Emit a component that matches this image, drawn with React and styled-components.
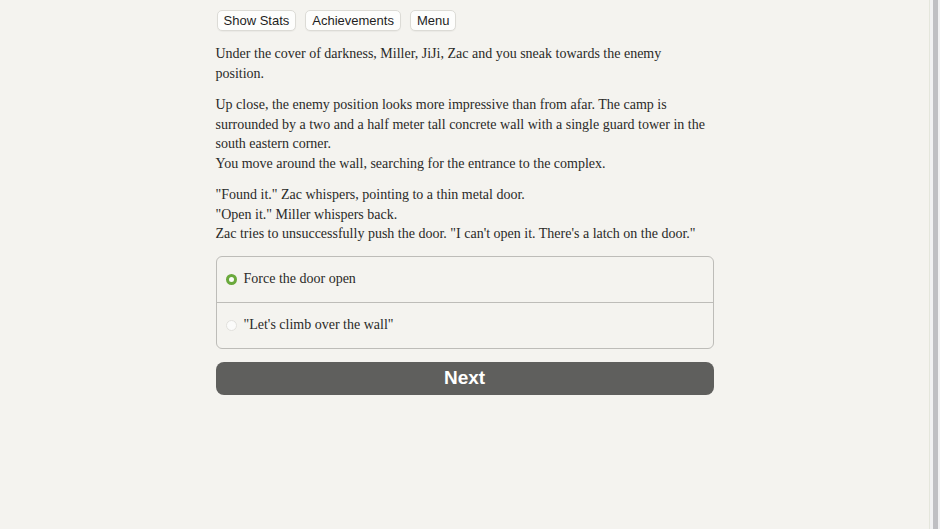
import React, { useState } from 'react';
import styled, { createGlobalStyle } from 'styled-components';

const GlobalStyle = createGlobalStyle`
  html, body {
    margin: 0;
    padding: 0;
    background: #f4f3ef;
  }
`;

const Screen = styled.div`
  display: flex;
  width: 940px;
  height: 529px;
  overflow: hidden;
  background: #f4f3ef;
`;

const Page = styled.main`
  flex: 1;
  display: flex;
  justify-content: center;
  border-right: 1px solid #e4e6dc;
`;

const Scrollbar = styled.div`
  width: 9px;
  display: flex;
  justify-content: center;
  padding-left: 1px;
  background: #f1f1f3;
`;

const Thumb = styled.div`
  width: 5px;
  height: 100%;
  background: #bfbfc3;
`;

const Column = styled.div`
  width: 498px;
  padding-top: 10px;
`;

const Toolbar = styled.nav`
  display: flex;
  gap: 9px;
  padding-left: 1px;
  margin-bottom: 13px;
`;

const ToolButton = styled.button`
  height: 21px;
  padding: 0 6px;
  font: 13px "Liberation Sans", Arial, sans-serif;
  color: #1e1e1e;
  background: #fdfdfc;
  border: 1px solid #dcdbd6;
  border-radius: 5px;
  box-shadow: 0 1px 1px rgba(0, 0, 0, 0.04);
`;

const Passage = styled.p`
  margin: 0 0 12px;
  font: 14px/19.5px "Liberation Serif", "Times New Roman", serif;
  color: #2a2a28;
`;

const Line = styled.span`
  display: block;
  white-space: nowrap;
`;

const Choices = styled.div`
  margin-top: 12px;
  border: 1px solid #bdbcb8;
  border-radius: 6px;
  overflow: hidden;
`;

const Choice = styled.label`
  display: flex;
  align-items: center;
  gap: 7px;
  height: 45px;
  padding-left: 9px;
  font: 14px "Liberation Serif", "Times New Roman", serif;
  color: #2a2a28;
  cursor: pointer;
  & + & {
    border-top: 1px solid #bdbcb8;
  }
`;

const Radio = styled.span`
  box-sizing: border-box;
  width: 11px;
  height: 11px;
  border-radius: 50%;
  background: #fbfbfa;
  border: ${p => (p.$on ? '3.5px solid #6aa93c' : '0.5px solid #e2e1dd')};
  flex: none;
`;

const NextButton = styled.button`
  display: block;
  width: 100%;
  height: 33px;
  margin-top: 13px;
  font: bold 19px "Liberation Sans", Arial, sans-serif;
  color: #fff;
  background: #5f5f5d;
  border: none;
  border-radius: 8px;
`;

const passages = [
  [
    'Under the cover of darkness, Miller, JiJi, Zac and you sneak towards the enemy',
    'position.',
  ],
  [
    'Up close, the enemy position looks more impressive than from afar. The camp is',
    'surrounded by a two and a half meter tall concrete wall with a single guard tower in the',
    'south eastern corner.',
    'You move around the wall, searching for the entrance to the complex.',
  ],
  [
    '"Found it." Zac whispers, pointing to a thin metal door.',
    '"Open it." Miller whispers back.',
    'Zac tries to unsuccessfully push the door. "I can\'t open it. There\'s a latch on the door."',
  ],
];

const options = ['Force the door open', '"Let\'s climb over the wall"'];

export default function App() {
  const [picked, setPicked] = useState(0);
  return (
    <Screen>
      <GlobalStyle />
      <Page>
        <Column>
          <Toolbar>
            <ToolButton>Show Stats</ToolButton>
            <ToolButton>Achievements</ToolButton>
            <ToolButton>Menu</ToolButton>
          </Toolbar>
          {passages.map((lines, i) => (
            <Passage key={i}>
              {lines.map(l => (
                <Line key={l}>{l}</Line>
              ))}
            </Passage>
          ))}
          <Choices>
            {options.map((o, i) => (
              <Choice key={o} onClick={() => setPicked(i)}>
                <Radio $on={picked === i} />
                {o}
              </Choice>
            ))}
          </Choices>
          <NextButton>Next</NextButton>
        </Column>
      </Page>
      <Scrollbar>
        <Thumb />
      </Scrollbar>
    </Screen>
  );
}
